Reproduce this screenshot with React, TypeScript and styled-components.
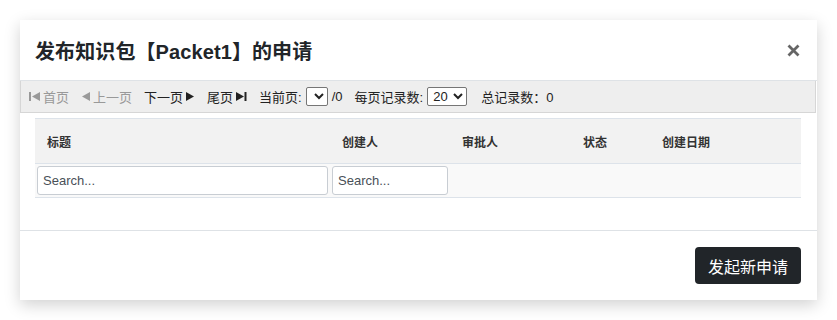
import styled, { createGlobalStyle } from "styled-components";

const GlobalStyle = createGlobalStyle`
  html, body {
    margin: 0;
    padding: 0;
    background: #ffffff;
  }
  body {
    font-family: "Helvetica Neue", "Liberation Sans", "Noto Sans CJK SC", sans-serif;
    color: #212529;
  }
`;

const Page = styled.div`
  padding: 20px;
  width: 837px;
  height: 320px;
  box-sizing: border-box;
`;

const Modal = styled.div`
  width: 797px;
  height: 280px;
  background: #fff;
  box-shadow: 0 5px 15px rgba(0, 0, 0, 0.18);
  display: flex;
  flex-direction: column;
`;

const Header = styled.div`
  height: 61px;
  box-sizing: border-box;
  display: flex;
  align-items: center;
  justify-content: space-between;
  padding: 0 17px 0 15px;
  border-bottom: 1px solid #dee2e6;
`;

const Title = styled.h4`
  margin: 0;
  font-size: 20px;
  font-weight: 600;
  color: #212529;
  letter-spacing: 0.1px;
`;

const Close = styled.button`
  border: none;
  background: none;
  padding: 0;
  color: #666;
  display: flex;
  align-items: center;
`;

const Pager = styled.div`
  height: 32px;
  box-sizing: border-box;
  margin-right: 1px;
  background: #eeeeee;
  border: 1px solid #d6d6d6;
  border-top: none;
  display: flex;
  align-items: center;
  padding-left: 8px;
  font-size: 13px;
`;

const PagerItem = styled.span<{ $disabled?: boolean }>`
  color: ${(p) => (p.$disabled ? "#999" : "#222")};
  margin-right: 12px;
  display: inline-flex;
  align-items: center;
  gap: 2px;
  white-space: nowrap;
`;

const Tiny = styled.select<{ $w: number }>`
  width: ${(p) => p.$w}px;
  height: 19px;
  font-size: 13px;
  margin: 0 2px 0 2px;
  padding: 0 1px;
  border: 1px solid #767676;
  border-radius: 2px;
  background: #fff;
  color: #222;
`;

const Body = styled.div`
  padding: 5px 15px 0 15px;
  flex: 1;
`;

const Table = styled.div`
  width: 766px;
  border-top: 1px solid #dde3ea;
`;

const Row = styled.div<{ $bg: string; $h: number }>`
  display: grid;
  grid-template-columns: 295px 120px 121px 79px 151px;
  height: ${(p) => p.$h}px;
  background: ${(p) => p.$bg};
  border-bottom: 1px solid #dde3ea;
  align-items: center;
`;

const Th = styled.div`
  font-size: 12px;
  font-weight: 700;
  color: #333;
  padding-left: 12px;
`;

const Td = styled.div`
  padding: 0 2px;
  display: flex;
`;

const Search = styled.input`
  width: 100%;
  box-sizing: border-box;
  height: 29px;
  border: 1px solid #c8cdd3;
  border-radius: 3px;
  padding: 0 5px;
  font-size: 13px;
  font-family: inherit;
  color: #495057;
  background: #fff;
  &::placeholder {
    color: #495057;
  }
`;

const Footer = styled.div`
  height: 70px;
  box-sizing: border-box;
  border-top: 1px solid #dee2e6;
  display: flex;
  align-items: center;
  justify-content: flex-end;
  padding: 0 16px 0 15px;
`;

const DarkButton = styled.button`
  background: #212529;
  color: #fff;
  border: none;
  border-radius: 4px;
  height: 37px;
  padding: 0 13px;
  font-size: 16px;
  font-family: inherit;
`;

const Tri = ({ dir, bar }: { dir: "l" | "r"; bar?: boolean }) => (
  <svg width={bar ? 12 : 10} height="11" viewBox={bar ? "0 0 12 11" : "0 0 10 11"}>
    {dir === "l" ? (
      <>
        {bar && <rect x="0" y="1" width="2" height="9" fill="currentColor" />}
        <path d={bar ? "M11 1 L3 5.5 L11 10 Z" : "M9 1 L1 5.5 L9 10 Z"} fill="currentColor" />
      </>
    ) : (
      <>
        <path d="M1 1 L9 5.5 L1 10 Z" fill="currentColor" />
        {bar && <rect x="9.5" y="1" width="2" height="9" fill="currentColor" />}
      </>
    )}
  </svg>
);

export default function App() {
  return (
    <>
      <GlobalStyle />
      <Page>
        <Modal>
          <Header>
            <Title>发布知识包【Packet1】的申请</Title>
            <Close aria-label="close">
              <svg width="13" height="13" viewBox="0 0 13 13">
                <path d="M1.5 1.5 L11.5 11.5 M11.5 1.5 L1.5 11.5" stroke="currentColor" strokeWidth="2.8" />
              </svg>
            </Close>
          </Header>
          <Pager>
            <PagerItem $disabled>
              <Tri dir="l" bar />首页
            </PagerItem>
            <PagerItem $disabled>
              <Tri dir="l" />上一页
            </PagerItem>
            <PagerItem>
              下一页<Tri dir="r" />
            </PagerItem>
            <PagerItem>
              尾页<Tri dir="r" bar />
            </PagerItem>
            <PagerItem>
              当前页:<Tiny $w={22}></Tiny>/0
            </PagerItem>
            <PagerItem>
              每页记录数:
              <Tiny $w={40} defaultValue="20">
                <option>10</option>
                <option>20</option>
                <option>50</option>
              </Tiny>
            </PagerItem>
            <PagerItem>总记录数：0</PagerItem>
          </Pager>
          <Body>
            <Table>
              <Row $bg="#f2f2f2" $h={44}>
                <Th>标题</Th>
                <Th>创建人</Th>
                <Th>审批人</Th>
                <Th>状态</Th>
                <Th>创建日期</Th>
              </Row>
              <Row $bg="#f9f9f9" $h={33}>
                <Td>
                  <Search placeholder="Search..." />
                </Td>
                <Td>
                  <Search placeholder="Search..." />
                </Td>
                <Td />
                <Td />
                <Td />
              </Row>
            </Table>
          </Body>
          <Footer>
            <DarkButton>发起新申请</DarkButton>
          </Footer>
        </Modal>
      </Page>
    </>
  );
}
